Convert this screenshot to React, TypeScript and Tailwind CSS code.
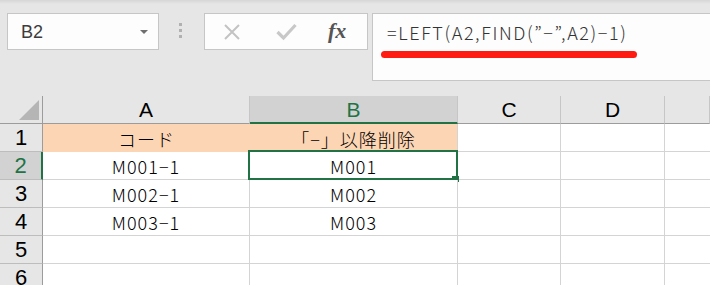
import React from 'react';

const cols = ['A', 'B', 'C', 'D', ''];

const rows: { a: string; b: string }[] = [
  { a: 'コード', b: '「−」以降削除' },
  { a: 'M001−1', b: 'M001' },
  { a: 'M002−1', b: 'M002' },
  { a: 'M003−1', b: 'M003' },
  { a: '', b: '' },
  { a: '', b: '' },
];

const cellFont = { fontFamily: '"Noto Sans CJK JP", "Liberation Sans", sans-serif' };
const uiFont = { fontFamily: '"Liberation Sans", Arial, sans-serif' };

export default function App() {
  return (
    <div className="w-[710px] h-[285px] overflow-hidden bg-[#e6e6e6] select-none">
      {/* Formula bar */}
      <div className="h-[96px] flex items-start pt-[13px] bg-[linear-gradient(#d6d6d6,#e6e6e6_4px)]">
        {/* Name box */}
        <div className="ml-[7px] w-[152px] h-[37px] border border-[#c6c6c6] bg-[#fdfdfd] flex items-center justify-between pl-[13px] pr-[10px]">
          <span className="text-[18px] text-[#3c3c3c] leading-none" style={uiFont}>B2</span>
          <span className="w-0 h-0 border-l-[4px] border-r-[4px] border-t-[4px] border-l-transparent border-r-transparent border-t-[#6f6f6f]" />
        </div>

        {/* Grip dots */}
        <div className="ml-[20px] mt-[10px] flex flex-col gap-[3px]">
          <span className="w-[3px] h-[3px] bg-[#b1b1b1]" />
          <span className="w-[3px] h-[3px] bg-[#b1b1b1]" />
          <span className="w-[3px] h-[3px] bg-[#b1b1b1]" />
        </div>

        {/* Cancel / enter / fx */}
        <div className="ml-[22px] w-[164px] h-[37px] border border-[#c6c6c6] bg-[#fdfdfd] flex items-center">
          <svg className="ml-[18px]" width="18" height="16" viewBox="0 0 18 16">
            <path d="M2 1 L16 15 M16 1 L2 15" stroke="#c3c3c3" strokeWidth="2" fill="none" />
          </svg>
          <svg className="ml-[35px]" width="21" height="18" viewBox="0 0 21 18">
            <path d="M1.5 9 L7.5 15 L19.5 2" stroke="#c8c8c8" strokeWidth="3.2" fill="none" />
          </svg>
          <span
            className="ml-[31px] text-[22px] italic font-bold text-[#555] leading-none -mt-[2px]"
            style={{ fontFamily: '"Liberation Serif", "Times New Roman", serif' }}
          >
            fx
          </span>
        </div>

        {/* Formula input */}
        <div className="ml-[4px] flex-1 h-[68px] border border-r-0 border-[#c6c6c6] bg-[#fdfdfd] pl-[8px] pt-[7px]">
          <div className="pl-[6px] text-[18px] font-light tracking-[1.6px] leading-[22px] text-[#333]" style={cellFont}>
            =LEFT(A2,FIND(”−”,A2)−1)
          </div>
          <div className="mt-[8px] w-[256px] h-[7px] rounded-full bg-[#fe1b12]" />
        </div>
      </div>

      {/* Sheet */}
      <div className="grid grid-cols-[43px_207px_208px_103px_104px_1fr] grid-rows-[28px_repeat(6,28px)]">
        {/* Corner */}
        <div className="border-r border-b border-[#9c9c9c] bg-[#e6e6e6] flex items-end justify-end pr-[3px] pb-[3px]">
          <svg width="20" height="20" viewBox="0 0 20 20">
            <polygon points="20,0 20,20 0,20" fill="#b5b5b5" />
          </svg>
        </div>
        {cols.map((c, i) => {
          const sel = c === 'B';
          return (
            <div
              key={i}
              className={
                sel
                  ? 'bg-[#d2d2d2] border-r border-r-[#c6c6c6] border-b-2 border-b-[#217346] text-[#217346] flex items-end justify-center pb-[2px] text-[21px] leading-none'
                  : 'bg-[#e6e6e6] border-r border-r-[#c6c6c6] border-b border-b-[#9c9c9c] text-black flex items-end justify-center pb-[3px] text-[21px] leading-none'
              }
              style={uiFont}
            >
              {c}
            </div>
          );
        })}

        {rows.map((r, ri) => {
          const n = ri + 1;
          const selRow = n === 2;
          const peach = n === 1;
          return (
            <React.Fragment key={n}>
              <div
                className={
                  selRow
                    ? 'bg-[#d2d2d2] border-r-2 border-r-[#217346] border-b border-b-[#bdbdbd] text-[#217346] flex items-end justify-center pb-[2px] text-[22px] leading-none'
                    : 'bg-[#e6e6e6] border-r border-r-[#9c9c9c] border-b border-b-[#bdbdbd] text-black flex items-end justify-center pb-[2px] text-[22px] leading-none'
                }
                style={uiFont}
              >
                {n}
              </div>
              <div
                className={
                  peach
                    ? 'bg-[#fcd5b4] flex items-end justify-center pb-[1px] text-[18px] font-light tracking-[1px] leading-[24px] text-black'
                    : 'bg-white border-r border-b border-[#d4d4d4] flex items-end justify-center pb-[1px] text-[18px] font-light tracking-[1px] leading-[24px] text-black'
                }
                style={cellFont}
              >
                {r.a}
              </div>
              <div
                className={
                  peach
                    ? 'bg-[#fcd5b4] border-r border-[#d4d4d4] flex items-end justify-center pb-[1px] text-[18px] font-light tracking-[1px] leading-[24px] text-black'
                    : 'relative bg-white border-r border-b border-[#d4d4d4] flex items-end justify-center pb-[1px] text-[18px] font-light tracking-[1px] leading-[24px] text-black'
                }
                style={cellFont}
              >
                {r.b}
                {selRow && (
                  <>
                    <span className="absolute -left-[2px] -top-[2px] -right-[1px] -bottom-[1px] border-2 border-[#217346]" />
                    <span className="absolute -right-[2px] -bottom-[3px] w-[7px] h-[6px] bg-[#217346]" />
                  </>
                )}
              </div>
              <div className="bg-white border-r border-b border-[#d4d4d4]" />
              <div className="bg-white border-r border-b border-[#d4d4d4]" />
              <div className="bg-white border-b border-[#d4d4d4]" />
            </React.Fragment>
          );
        })}
      </div>
    </div>
  );
}
